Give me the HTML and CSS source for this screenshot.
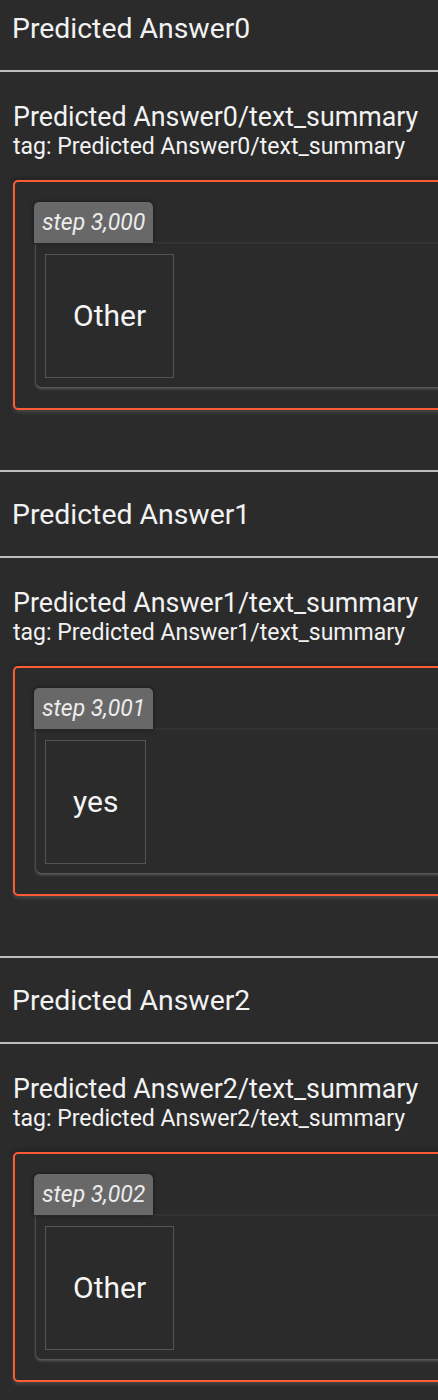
FILE: index.html
```html
<!DOCTYPE html>
<html>
<head>
<meta charset="utf-8">
<link rel="stylesheet" href="styles.css">
</head>
<body>
<div class="page">
  <section class="group">
    <div class="group-header">Predicted Answer0</div>
    <div class="group-body">
      <div class="title">Predicted Answer0/text_summary</div>
      <div class="tag">tag: Predicted Answer0/text_summary</div>
      <div class="card">
        <div class="step">step 3,000</div>
        <div class="content">
          <div class="textbox">Other</div>
        </div>
      </div>
    </div>
  </section>
  <section class="group">
    <div class="group-header">Predicted Answer1</div>
    <div class="group-body">
      <div class="title">Predicted Answer1/text_summary</div>
      <div class="tag">tag: Predicted Answer1/text_summary</div>
      <div class="card">
        <div class="step">step 3,001</div>
        <div class="content">
          <div class="textbox">yes</div>
        </div>
      </div>
    </div>
  </section>
  <section class="group">
    <div class="group-header">Predicted Answer2</div>
    <div class="group-body">
      <div class="title">Predicted Answer2/text_summary</div>
      <div class="tag">tag: Predicted Answer2/text_summary</div>
      <div class="card">
        <div class="step">step 3,002</div>
        <div class="content">
          <div class="textbox">Other</div>
        </div>
      </div>
    </div>
  </section>
</div>
</body>
</html>
```
FILE: styles.css
```css
html, body {
  margin: 0;
  padding: 0;
  background: #2b2b2b;
  overflow-x: hidden;
}
body {
  font-family: Roboto, "Noto Sans", sans-serif;
  color: #f2f2f2;
}
.page {
  margin-top: -16px;
}
.group-header {
  height: 84px;
  border-top: 2px solid #bdbdbd;
  border-bottom: 2px solid #bdbdbd;
  display: flex;
  align-items: center;
  padding-left: 12px;
  font-size: 28.4px;
}
.group-body {
  padding: 30px 0 60px 13px;
}
.title {
  font-size: 26.8px;
  line-height: 31px;
}
.tag {
  font-size: 23px;
  line-height: 27px;
  margin-bottom: 20px;
}
.card {
  border: 2px solid #ff5b37;
  border-radius: 5px;
  padding: 20px 0 21px 19px;
  margin-right: -60px;
  box-shadow: 0 2px 4px rgba(255, 255, 255, 0.2), 0 0 5px rgba(0, 0, 0, 0.6);
}
.step {
  display: inline-block;
  background: #686868;
  color: #ececec;
  font-style: italic;
  font-size: 23px;
  line-height: 27px;
  padding: 7px 8px;
  border-radius: 5px 5px 0 0;
  box-shadow: 0 0 4px rgba(0, 0, 0, 0.5);
  position: relative;
  z-index: 1;
  vertical-align: top;
}
.content {
  margin-left: 2px;
  border-top: 1px solid #323232;
  padding: 10px 9px 9px 9px;
  border-radius: 0 0 0 5px;
  box-shadow: 0 2px 3px rgba(255, 255, 255, 0.22), -1px 0 2px rgba(255, 255, 255, 0.12);
}
.textbox {
  display: inline-block;
  vertical-align: top;
  border: 1px solid #555;
  font-size: 30px;
  line-height: 36px;
  padding: 43px 27px;
  color: #f5f5f5;
}
```
